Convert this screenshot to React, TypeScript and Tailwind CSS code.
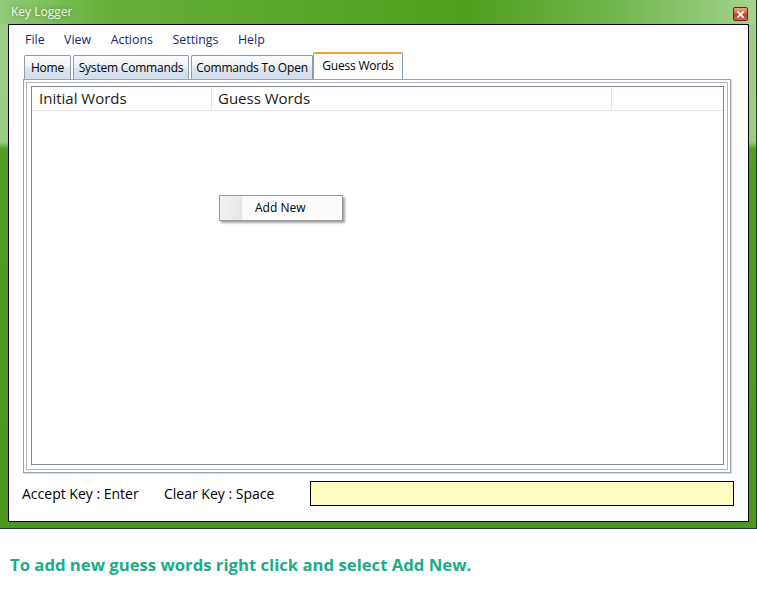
import React from 'react';

const menuItems = ['File', 'View', 'Actions', 'Settings', 'Help'];

const tabs = [
  { label: 'Home', w: 'w-[47px]', ml: 'ml-[1px]' },
  { label: 'System Commands', w: 'w-[116px]', ml: 'ml-[2px]' },
  { label: 'Commands To Open', w: 'w-[122px]', ml: 'ml-[2px]' },
];

export default function App() {
  return (
    <div className="w-[757px] h-[598px] bg-white flex flex-col font-['Open_Sans',sans-serif]">
      {/* Window */}
      <div className="w-[757px] h-[529px] flex flex-col border-r border-b border-[#223f2e]">
        {/* Title bar */}
        <div className="h-[24px] flex justify-between pl-[11px] pr-[8px] bg-[linear-gradient(90deg,#93cb7a_0%,#66b03a_14%,#58a729_40%,#4f9f1e_62%,#6fb54a_80%,#a2d38c_100%)]">
          <span className="text-[12px] leading-[24px] text-[#f4fbf0] [text-shadow:0_0_4px_rgba(40,80,20,0.6)]">Key Logger</span>
          <div className="mt-[7px] w-[15px] h-[14px] rounded-[2px] border border-[#6b2418] bg-[linear-gradient(180deg,#eba392_0%,#d7604a_45%,#c0402b_55%,#d2684f_100%)] flex items-center justify-center">
            <svg width="7" height="7" viewBox="0 0 7 7">
              <path d="M1 1 L6 6 M6 1 L1 6" stroke="#ffffff" strokeWidth="1.8" strokeLinecap="square" />
            </svg>
          </div>
        </div>

        {/* Frame + client */}
        <div className="flex-1 flex pl-[8px] pr-[7px] pb-[6px] bg-[linear-gradient(180deg,#9dd086_0px,#9acd82_118px,#4f9e23_125px,#4a991e_100%)]">
          <div className="flex-1 border border-black bg-white flex flex-col">
            {/* Menu */}
            <div className="h-[27px] flex items-center pt-[3px] pl-[16px] gap-[19.5px] text-[12.4px] text-[#1c2474]">
              {menuItems.map(m => (
                <span key={m}>{m}</span>
              ))}
            </div>

            {/* Tabs */}
            <div className="h-[27px] flex items-end pl-[14px]">
              {tabs.map(t => (
                <div
                  key={t.label}
                  className={`${t.w} ${t.ml} h-[24px] pt-[1px] border border-b-0 border-[#8c9bb0] rounded-t-[2px] bg-[linear-gradient(180deg,#fbfcfd_0%,#eef2f7_45%,#dbe4ef_55%,#d3deeb_100%)] flex items-center justify-center whitespace-nowrap tracking-[-0.2px] text-[12px] text-black`}
                >
                  {t.label}
                </div>
              ))}
              <div className="w-[90px] h-[27px] pb-[2px] border border-b-0 border-[#8c9bb0] border-t-2 border-t-[#eba33c] rounded-t-[2px] bg-white flex items-center justify-center whitespace-nowrap tracking-[-0.2px] text-[12px] text-black">
                Guess Words
              </div>
            </div>

            {/* Tab panel */}
            <div className="ml-[14px] mr-[17px] h-[394px] border border-[#97a3b4] bg-white p-[2px] shadow-[1px_1px_1px_#d8dbe0]">
              <div className="h-full border border-[#b3b7bd] pl-[4px] pt-[3px] pr-[3px] pb-[4px]">
                <div className="relative h-full border border-[#828790] bg-white">
                  <div className="h-[24px] flex border-b border-[#e5e5e5] text-[15px] text-[#1a1a1a]">
                    <div className="w-[180px] pl-[7px] flex items-center border-r border-[#e5e5e5]">Initial Words</div>
                    <div className="w-[400px] pl-[6px] flex items-center border-r border-[#e5e5e5]">Guess Words</div>
                  </div>

                  {/* Context menu */}
                  <div className="absolute left-[187px] top-[108px] w-[124px] h-[26px] border border-[#979797] bg-[#fbfbfb] shadow-[2px_2px_2px_rgba(0,0,0,0.35)] flex">
                    <div className="w-[23px] h-full bg-[linear-gradient(90deg,#f2f2f2,#e6e6e6)] border-r border-[#f8f8f8]" />
                    <div className="pl-[12px] flex items-center text-[12px] text-black">Add New</div>
                  </div>
                </div>
              </div>
            </div>

            {/* Bottom row */}
            <div className="h-[40px] flex items-center pl-[13px] text-[14px] text-black">
              <span className="w-[142px]">Accept Key : Enter</span>
              <span className="w-[146px]">Clear Key : Space</span>
              <div className="w-[424px] h-[25px] border border-black bg-[#ffffc3]" />
            </div>
          </div>
        </div>
      </div>

      {/* Caption */}
      <div className="mt-[25px] pl-[10px] leading-[22px] text-[16.7px] font-bold text-[#19ad8a]">
        To add new guess words right click and select Add New.
      </div>
    </div>
  );
}
